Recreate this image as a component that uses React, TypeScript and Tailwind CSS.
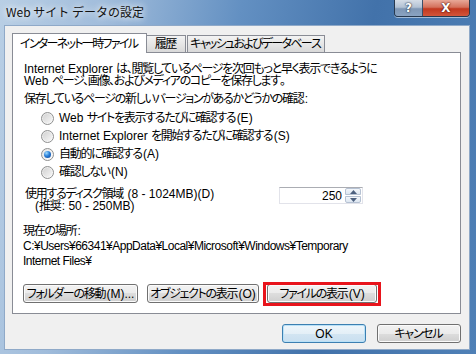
import React from "react";

const uiFont = "font-['Liberation_Sans','Noto_Sans_CJK_JP',sans-serif] [font-feature-settings:'palt']";

// MS UI Gothic kana are narrower than Noto's, so tighten the CJK runs only
// (last glyph of a run keeps its width so it doesn't collide with the next one)
function J({ children, tight }: { children: string; tight?: boolean }) {
  const parts = children.split(/([\u3000-\u30ff\u4e00-\u9fff\uff00-\uffef]+)/);
  return (
    <>
      {parts.map((p, i) =>
        i % 2 ? (
          <React.Fragment key={i}>
            <span className={tight ? "tracking-[-1.7px]" : "tracking-[-1.3px]"}>{p.slice(0, -1)}</span>
            {p.slice(-1)}
          </React.Fragment>
        ) : (
          p
        )
      )}
    </>
  );
}

function Radio({ checked, label }: { checked?: boolean; label: string }) {
  return (
    <div className="flex h-[18px] items-center">
      <span className="ml-[18px] flex h-[13px] w-[13px] items-center justify-center rounded-full border border-[#8e8f8f] bg-[linear-gradient(135deg,#e4e4e4,#fdfdfd)]">
        {checked ? (
          <span className="h-[7px] w-[7px] rounded-full bg-[radial-gradient(circle_at_35%_30%,#9fdcff_0%,#2a7fd8_45%,#0d3f8f_100%)]" />
        ) : (
          <span className="h-[9px] w-[9px] rounded-full bg-[linear-gradient(135deg,#d2d2d2,#f6f6f6)]" />
        )}
      </span>
      <span className="ml-[5px] whitespace-nowrap leading-[12px]">
        <J>{label}</J>
      </span>
    </div>
  );
}

function Button({
  children,
  width,
  primary,
}: {
  children: string;
  width: string;
  primary?: boolean;
}) {
  return (
    <button
      type="button"
      className={`${width} flex h-[19px] items-center justify-center whitespace-nowrap rounded-[3px] border text-[12px] leading-[12px] text-black ${
        primary
          ? "border-[#3c7fb1] bg-[linear-gradient(#eef6fb_0%,#e4eff7_50%,#d3e5f2_50%,#c9dff0_100%)] shadow-[inset_0_0_0_1px_#b9e1f7]"
          : "border-[#707070] bg-[linear-gradient(#f2f2f2_0%,#ebebeb_50%,#dddddd_50%,#cfcfcf_100%)] shadow-[inset_0_0_0_1px_#fbfbfb]"
      }`}
    >
      <J>{children}</J>
    </button>
  );
}

export default function App() {
  return (
    <div
      className={`flex h-[354px] w-[476px] flex-col overflow-hidden bg-[linear-gradient(100deg,#b9cfe5_0%,#a0bcdb_20%,#6390c2_45%,#4272aa_70%,#4f80b6_100%)] text-[12px] text-black ${uiFont}`}
    >
      {/* Title bar */}
      <div className="flex h-[25px] shrink-0 items-start pl-[6px] pr-[6px]">
        <span className="mt-[5px] whitespace-nowrap font-['Noto_Sans_CJK_JP',sans-serif] text-[12px] leading-[14px] text-[#111] [font-feature-settings:normal] [text-shadow:0_0_6px_#ffffff,0_0_10px_rgba(255,255,255,0.8)]">
          Web サイト データの設定
        </span>
        <div className="ml-auto flex h-[17px] overflow-hidden rounded-b-[4px] border border-t-0 border-[#27394f] shadow-[0_1px_0_rgba(255,255,255,0.5)]">
          <div className="flex w-[28px] items-center justify-center border-r border-[#3b4f69] bg-[linear-gradient(#d5dde7_0%,#b3c2d4_45%,#7f97b5_55%,#8aa3c2_100%)] font-['DejaVu_Sans',sans-serif] text-[12px] font-bold text-white [text-shadow:0_0_2px_#1d2a3a,0_0_1px_#1d2a3a]">
            ?
          </div>
          <div className="flex w-[46px] items-center justify-center bg-[linear-gradient(#e8a898_0%,#d4715c_45%,#c2381f_55%,#d3553a_100%)] font-['DejaVu_Sans',sans-serif] text-[12px] font-bold text-white [text-shadow:0_0_2px_#4a0f08,0_0_1px_#4a0f08]">
            X
          </div>
        </div>
      </div>

      {/* Client area */}
      <div className="ml-[4px] mr-[6px] flex h-[325px] w-[466px] flex-col border border-[#8fa9c8] bg-[#f0f0f0] pl-[7px] pr-[7px] pt-[7px]">
        {/* Tabs */}
        <div className="relative z-10 flex h-[19px] items-end whitespace-nowrap">
          <div className="mb-[-1px] flex h-[20px] w-[135px] items-center justify-center border border-b-0 border-[#898c95] bg-white">
            <J tight>インターネット一時ファイル</J>
          </div>
          <div className="flex h-[17px] w-[39px] items-center justify-center border border-b-0 border-l-0 border-[#898c95] bg-[linear-gradient(#f3f3f3,#e6e6e6_50%,#d9d9d9)]">
            <J>履歴</J>
          </div>
          <div className="ml-[1px] flex h-[17px] w-[138px] items-center justify-center border border-b-0 border-[#898c95] bg-[linear-gradient(#f3f3f3,#e6e6e6_50%,#d9d9d9)]">
            <J tight>キャッシュおよびデータベース</J>
          </div>
        </div>

        {/* Tab panel */}
        <div className="flex h-[262px] w-[449px] flex-col border border-[#898c95] bg-white pl-[10px]">
          <p className="ml-[1px] mt-[10px] whitespace-nowrap leading-[12px]">
            <J>Internet Explorer は、閲覧しているページを次回もっと早く表示できるように</J>
            <br />
            <J>Web ページ、画像、およびメディアのコピーを保存します。</J>
          </p>
          <p className="ml-[1px] mt-[6px] whitespace-nowrap leading-[12px]">
            <J>保存しているページの新しいバージョンがあるかどうかの確認:</J>
          </p>
          <div className="mt-[4px] flex flex-col">
            <Radio label="Web サイトを表示するたびに確認する(E)" />
            <Radio label="Internet Explorer を開始するたびに確認する(S)" />
            <Radio checked label="自動的に確認する(A)" />
            <Radio label="確認しない(N)" />
          </div>

          <div className="mt-[6px] flex items-start">
            <div className="ml-[2px] mt-[1px] w-[254px] whitespace-nowrap leading-[12px]">
              <div>
                <J>使用するディスク領域 (8 - 1024MB)(D)</J>
              </div>
              <div className="pl-[10px]">
                <J>(推奨: 50 - 250MB)</J>
              </div>
            </div>
            <div className="flex h-[17px] w-[84px] items-center border border-[#e2e3ea] border-t-[#abadb3] bg-white">
              <span className="flex-1 pr-[3px] text-right leading-[12px]">250</span>
              <div className="mr-[1px] flex h-[15px] w-[16px] flex-col">
                <div className="flex h-[7px] items-center justify-center rounded-t-[2px] border border-[#b6c2d3] bg-[linear-gradient(#f4f7fb,#dde6f1)]">
                  <svg width="7" height="4" viewBox="0 0 7 4">
                    <path d="M0 4 L3.5 0 L7 4 Z" fill="#4c607f" />
                  </svg>
                </div>
                <div className="mt-[1px] flex h-[7px] items-center justify-center rounded-b-[2px] border border-[#b6c2d3] bg-[linear-gradient(#f4f7fb,#dde6f1)]">
                  <svg width="7" height="4" viewBox="0 0 7 4">
                    <path d="M0 0 L3.5 4 L7 0 Z" fill="#4c607f" />
                  </svg>
                </div>
              </div>
            </div>
          </div>

          <p className="mt-[13px] leading-[12px]">
            <J>現在の場所:</J>
          </p>
          <p className="mt-[2px] whitespace-nowrap leading-[15px] tracking-[-0.5px]">
            C:¥Users¥66341¥AppData¥Local¥Microsoft¥Windows¥Temporary
            <br />
            Internet Files¥
          </p>

          <div className="mt-[15px] flex items-center">
            <Button width="w-[115px]">フォルダーの移動(M)...</Button>
            <div className="ml-[9px]">
              <Button width="w-[112px]">オブジェクトの表示(O)</Button>
            </div>
            <div className="relative ml-[8px]">
              <Button width="w-[110px]">ファイルの表示(V)</Button>
              <div className="pointer-events-none absolute left-[-4px] right-[-4px] top-[-2px] bottom-[-3px] border-[3px] border-[#e8141c]" />
            </div>
          </div>
        </div>

        {/* Dialog buttons */}
        <div className="mt-[10px] flex justify-end gap-[11px] pr-[1px]">
          <Button width="w-[84px]" primary>
            OK
          </Button>
          <Button width="w-[84px]">キャンセル</Button>
        </div>
      </div>
    </div>
  );
}
